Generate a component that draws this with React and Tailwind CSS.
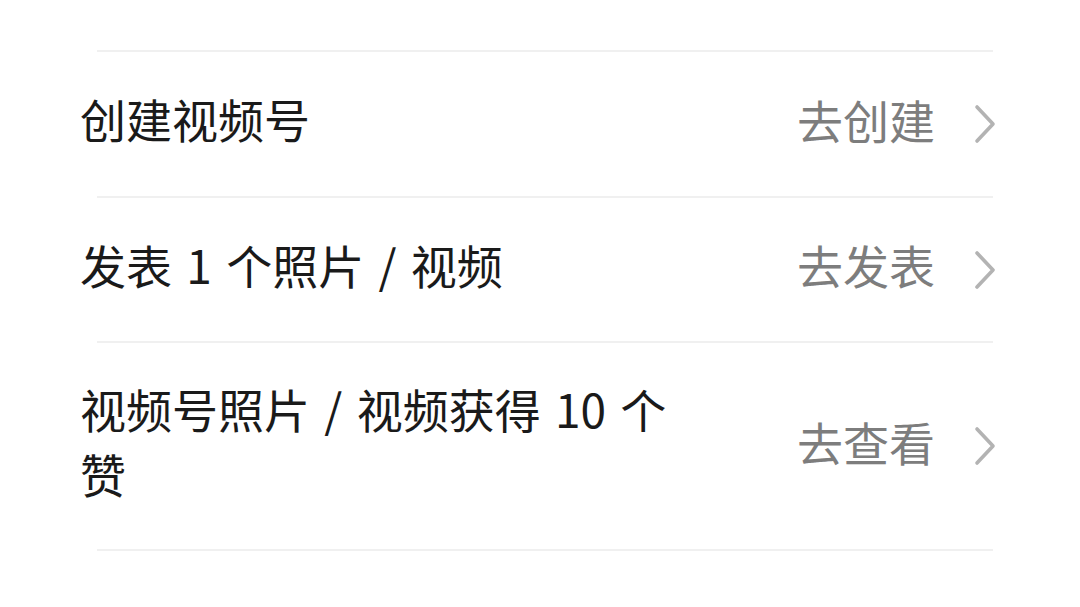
import React from "react";

const Chevron = () => (
  <svg width="24" height="40" viewBox="0 0 24 40" className="shrink-0">
    <path d="M4 3 L20 20 L4 37" fill="none" stroke="#b3b3b3" strokeWidth="3.6" strokeLinecap="round" strokeLinejoin="round" />
  </svg>
);

const Divider = () => <div className="ml-[97px] w-[896px] h-[2px] bg-[#f0f0f0]" />;

const Row = ({ left, right, h }) => (
  <div className={`flex items-center pl-[80px] pr-[83px] ${h}`}>
    <div className="flex-1 pb-[11px] text-[46px] leading-[65px] text-[#1a1a1a] [word-spacing:4px]">{left}</div>
    <div className="flex items-center gap-[38px]">
      <span className="pb-[11px] text-[46px] leading-none text-[#7d7d7d]">{right}</span>
      <Chevron />
    </div>
  </div>
);

export default function App() {
  return (
    <div
      className="w-[1080px] h-[607px] bg-white overflow-hidden pt-[50px]"
      style={{ fontFamily: '"Noto Sans CJK SC", "Noto Sans", sans-serif' }}
    >
      <Divider />
      <Row h="h-[144px]" left="创建视频号" right="去创建" />
      <Divider />
      <Row h="h-[143px]" left="发表 1 个照片 / 视频" right="去发表" />
      <Divider />
      <Row
        h="h-[206px]"
        left={<div className="w-[640px]">视频号照片 / 视频获得 10 个 赞</div>}
        right="去查看"
      />
      <Divider />
    </div>
  );
}
